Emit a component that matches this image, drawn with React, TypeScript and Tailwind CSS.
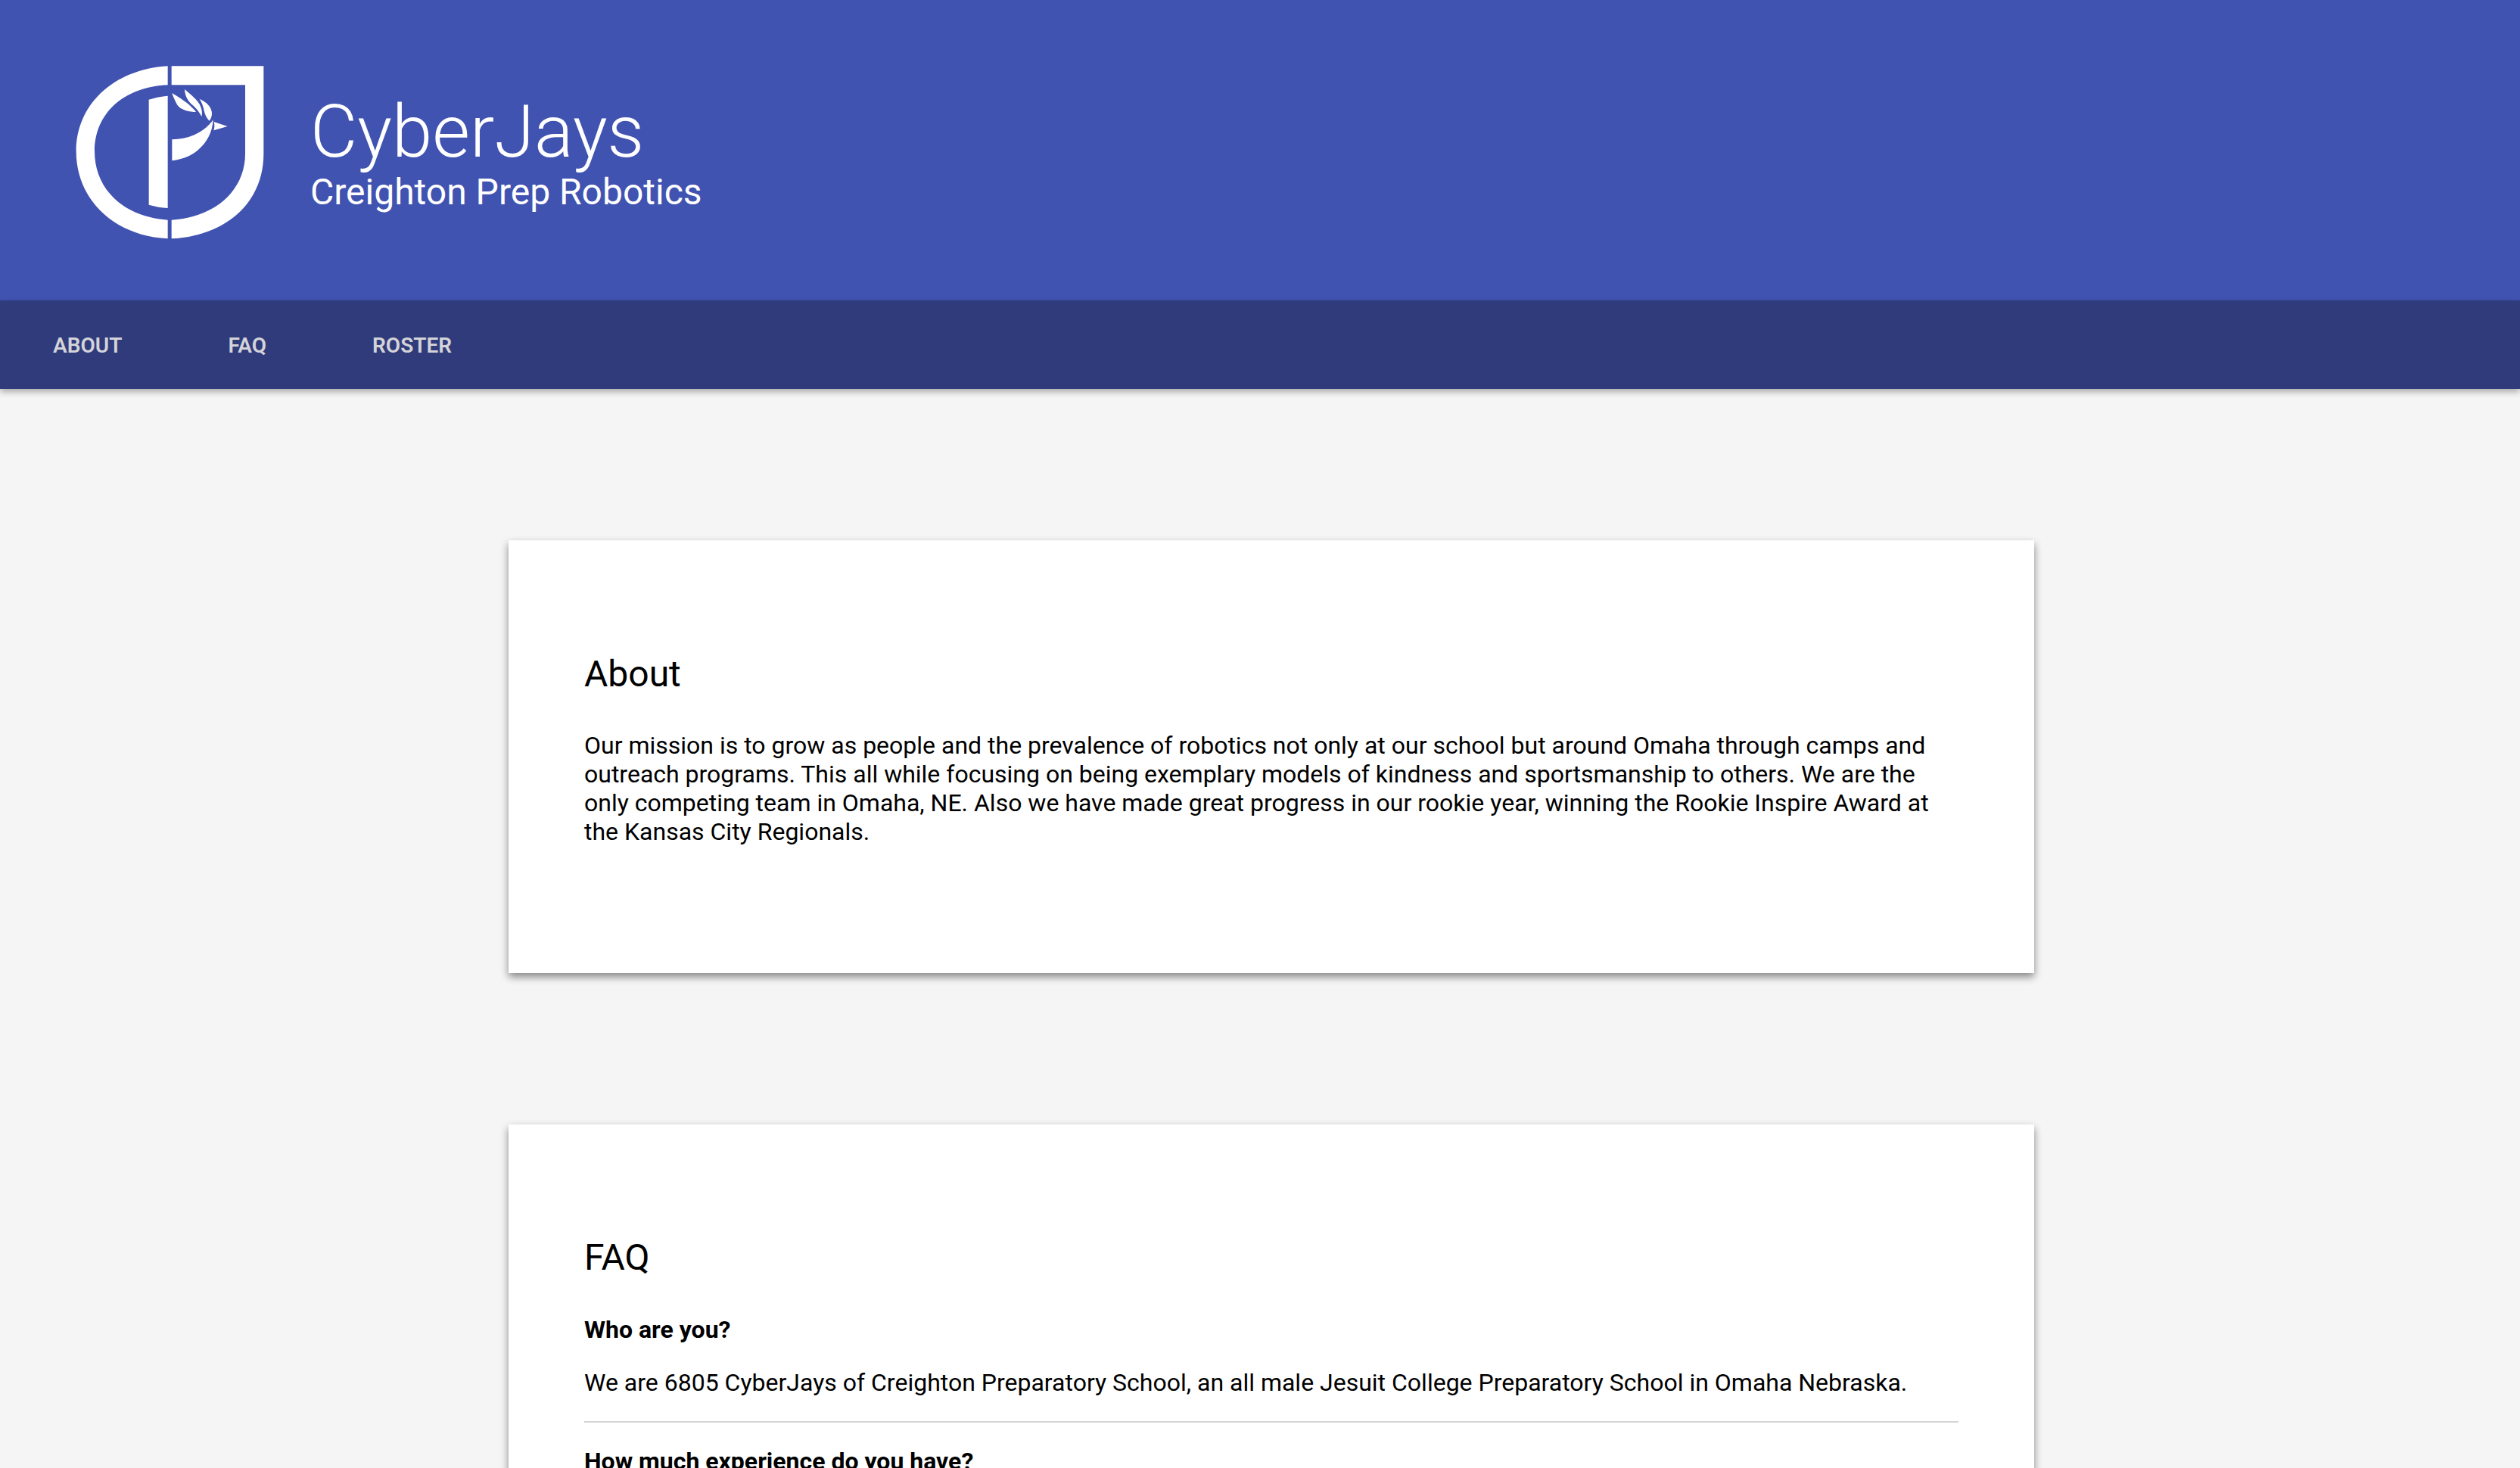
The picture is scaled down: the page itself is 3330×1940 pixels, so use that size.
const NAV_ITEMS = ["ABOUT", "FAQ", "ROSTER"];

function Logo() {
  return (
    <svg viewBox="0 0 960 840" className="w-[320px] h-[280px] shrink-0 block" fill="#fff">
      {/* C */}
      <path d="M485 82C270 95 122 235 122 420C122 610 270 755 485 766V692C310 680 195 570 195 420C195 270 310 165 485 157Z" />
      {/* J shield */}
      <path d="M500 82H865V430C865 620 720 755 500 766V692C680 680 792 570 792 430V157H500Z" />
      {/* P stem */}
      <path d="M410 215C435 207 460 202 485 200V645C460 644 435 639 410 632Z" />
      {/* P bowl / bird body */}
      <path d="M502 373C570 372 630 345 665 295C662 345 640 385 605 415C575 440 540 452 502 457Z" />
      {/* beak */}
      <path d="M668 303L722 321L667 337C671 326 671 314 668 303Z" />
      {/* feathers */}
      <path d="M502 189C540 212 575 235 597 264C565 264 535 255 522 235C514 220 507 205 502 189Z" />
      <path d="M552 174C553 200 565 222 585 238C600 252 612 268 619 282C624 262 618 240 603 222C590 205 570 190 552 174Z" />
      <path d="M611 212C640 225 660 245 660 270C660 280 657 290 650 299C635 285 630 265 627 250C623 235 618 222 611 212Z" />
    </svg>
  );
}

export default function App() {
  return (
    <div className="h-[1940px] overflow-hidden bg-[#f5f5f5] font-['Roboto',sans-serif] text-black">
      <header className="h-[397px] bg-[#4153b1] flex items-start pl-[60px] pt-[60px]">
        <Logo />
        <div className="ml-[30px] pt-[59px] text-white">
          <div className="text-[96px] leading-[110px] font-light">CyberJays</div>
          <div className="text-[48px] leading-[56px] -mt-[3px]">Creighton Prep Robotics</div>
        </div>
      </header>
      <nav className="relative h-[117px] bg-[#303b7c] flex items-center pl-[70px] pt-[3px] gap-[140px] shadow-[0_4px_8px_rgba(0,0,0,0.3)]">
        {NAV_ITEMS.map((item) => (
          <a key={item} className="text-[28px] font-semibold text-[#d4d4d8]">
            {item}
          </a>
        ))}
      </nav>
      <main className="pt-[200px] pl-[672px] flex flex-col gap-[200px]">
        <section className="w-[2016px] h-[572px] bg-white px-[100px] pt-[149px] shadow-[0_5px_10px_rgba(0,0,0,0.45)]">
          <h2 className="text-[48px] leading-[56px]">About</h2>
          <p className="mt-[47px] text-[32px] leading-[38px]">
            Our mission is to grow as people and the prevalence of robotics not only at our school but around Omaha through camps and outreach programs. This all while focusing on being exemplary models of kindness and sportsmanship to others. We are the only competing team in Omaha, NE. Also we have made great progress in our rookie year, winning the Rookie Inspire Award at the Kansas City Regionals.
          </p>
        </section>
        <section className="w-[2016px] h-[600px] bg-white px-[100px] pt-[148px] shadow-[0_5px_10px_rgba(0,0,0,0.45)]">
          <h2 className="text-[48px] leading-[56px]">FAQ</h2>
          <h3 className="mt-[48px] text-[32px] leading-[38px] font-bold">Who are you?</h3>
          <p className="mt-[32px] text-[32px] leading-[38px]">
            We are 6805 CyberJays of Creighton Preparatory School, an all male Jesuit College Preparatory School in Omaha Nebraska.
          </p>
          <div className="mt-[32px] border-t-2 border-[#d4d4d4]" />
          <h3 className="mt-[32px] text-[32px] leading-[38px] font-bold">How much experience do you have?</h3>
        </section>
      </main>
    </div>
  );
}
